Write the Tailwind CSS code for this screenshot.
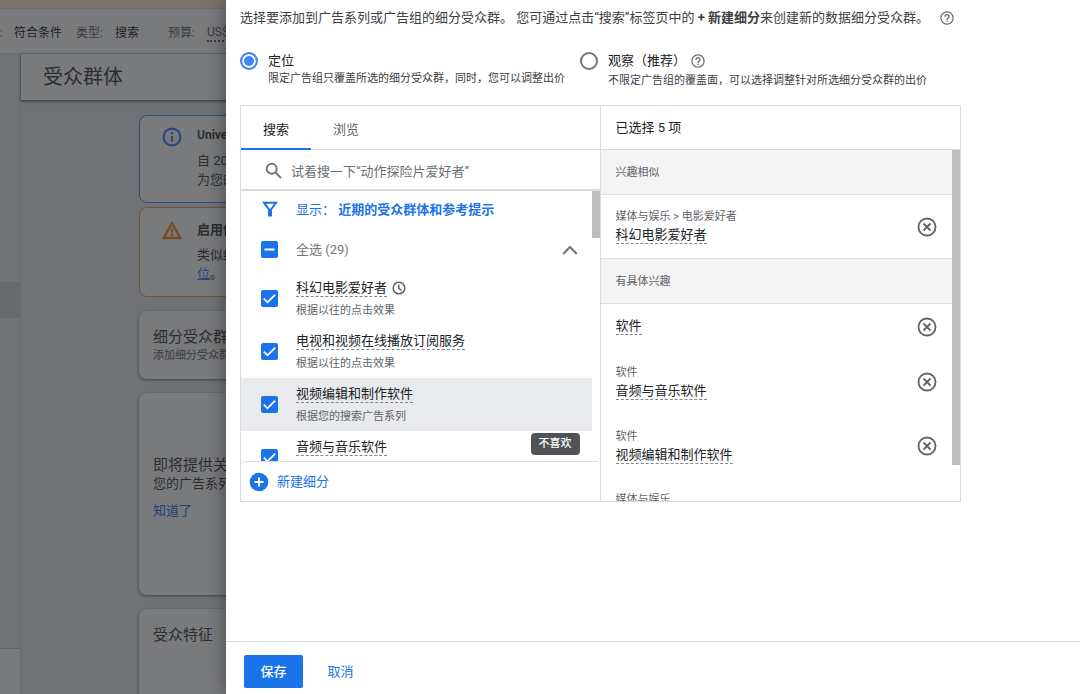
<!DOCTYPE html>
<html lang="zh-CN">
<head>
<meta charset="utf-8">
<meta name="viewport" content="width=device-width, initial-scale=1">
<title>受众群体</title>
<script src="https://cdn.jsdelivr.net/npm/@tailwindcss/browser@4"></script>
</head>
<body class="font-['Roboto','Noto_Sans_CJK_SC',sans-serif] text-[13px] leading-[17px] text-[#3c4043]">
<svg class="hidden" aria-hidden="true">
  <symbol id="help" viewBox="0 0 24 24"><path fill="currentColor" d="M11 18h2v-2h-2v2zm1-16C6.48 2 2 6.48 2 12s4.48 10 10 10 10-4.48 10-10S17.52 2 12 2zm0 18.300c-4.580 0-8.300-3.720-8.300-8.300s3.720-8.300 8.300-8.300 8.300 3.720 8.300 8.300-3.720 8.300-8.300 8.300zm0-14.300c-2.210 0-4 1.790-4 4h2c0-1.100.9-2 2-2s2 .9 2 2c0 2-3 1.750-3 5h2c0-2.250 3-2.500 3-5 0-2.210-1.790-4-4-4z"/></symbol>
  <symbol id="remove" viewBox="0 0 24 24"><g fill="none" stroke="currentColor" stroke-width="2"><circle cx="12" cy="12" r="9.300"/><path d="M8.200 8.200l7.600 7.600M15.800 8.200l-7.600 7.600"/></g></symbol>
  <symbol id="tick" viewBox="0 0 17 17"><path fill="none" stroke="#fff" stroke-width="1.800" d="M2.800 8.600l3.700 3.700 7.700-7.700"/></symbol>
</svg>
<div class="relative h-screen overflow-hidden bg-[#e8eaed]">

  <!-- Page behind the drawer -->
  <div class="flex h-full flex-col">
    <div class="h-2 shrink-0 bg-[#fef0d0]"></div>
    <header class="flex h-[46px] shrink-0 items-center border-y border-[#dadce0] bg-white pt-1 text-xs whitespace-nowrap text-[#5f6368]">
      <span class="w-3.5">:</span>
      <span class="w-[62px] text-[#202124]">符合条件</span>
      <span class="w-[39px]">类型:</span>
      <span class="w-[53px] text-[#202124]">搜索</span>
      <span class="w-[39px]">预算:</span>
      <span class="border-b-2 border-dotted border-[#5f6368]">US$10.00</span>
    </header>
    <div class="flex min-h-0 flex-1">
      <nav class="flex w-[21px] shrink-0 flex-col border-r border-[#dadce0]">
        <div class="mt-[228px] h-9 bg-[#d5d7da]"></div>
        <div class="mt-auto h-[46px] border-t border-[#bdc1c6] bg-white"></div>
      </nav>
      <main class="flex min-w-0 flex-1 flex-col">
        <h1 class="flex h-[46px] shrink-0 items-center bg-white pl-[22px] text-xl font-normal shadow-[0_1px_3px_rgba(0,0,0,0.7)]">受众群体</h1>
        <div class="flex flex-1 flex-col overflow-hidden pt-[15px] pl-[118px] whitespace-nowrap">
          <section class="mb-1 flex h-[88px] shrink-0 gap-3.5 rounded-lg border border-[#4a90ff] bg-white pt-2.5 pl-[21px]">
            <svg class="size-[22px] shrink-0 text-[#3b86ff]" viewBox="0 0 24 24"><g fill="none" stroke="currentColor" stroke-width="2.400"><circle cx="12" cy="12" r="9.200"/><path d="M12 6.500v2.400M12 11v6.500"/></g></svg>
            <div class="leading-[19px]">
              <h2 class="mb-1.5 text-xs leading-[19px] font-bold">Universal Analytics</h2>
              <p>自 2023 年起</p>
              <p>为您的账号</p>
            </div>
          </section>
          <section class="mb-3.5 flex h-[90px] shrink-0 gap-3.5 rounded-lg border border-[#f0a050] bg-white pt-3 pl-[21px]">
            <svg class="size-[22px] shrink-0 text-[#ff8c1a]" viewBox="0 0 24 24"><g fill="none" stroke="currentColor" stroke-width="2.600"><path d="M12 3.400L21 19.700H3z"/><path d="M12 9.500v4.500M12 15.400v2.400"/></g></svg>
            <div class="leading-[19px]">
              <h2 class="mb-1.5 font-bold">启用优化型定位</h2>
              <p>类似细分受众群</p>
              <p><a href="#" class="text-[#2a7fff] underline">位</a>。</p>
            </div>
          </section>
          <section class="mb-3.5 h-[68px] shrink-0 rounded-lg bg-white pt-4 pl-3.5 shadow-[0_1px_3px_rgba(0,0,0,0.5)]">
            <h2 class="text-[15px] leading-5">细分受众群</h2>
            <p class="text-[11px] text-[#5f6368]">添加细分受众群</p>
          </section>
          <section class="mb-3.5 flex h-[202px] shrink-0 flex-col items-start justify-center rounded-lg bg-white pb-3.5 pl-3.5 shadow-[0_1px_3px_rgba(0,0,0,0.5)]">
            <h2 class="text-[15px] leading-5">即将提供关于受众群体</h2>
            <p class="mb-2.5">您的广告系列</p>
            <a href="#" class="text-[#1a73ff]">知道了</a>
          </section>
          <section class="h-[120px] shrink-0 rounded-lg bg-white pt-4 pl-3.5 shadow-[0_1px_3px_rgba(0,0,0,0.5)]">
            <h2 class="text-[15px] leading-5">受众特征</h2>
          </section>
        </div>
      </main>
    </div>
  </div>
  <div class="absolute inset-0 bg-[#202124]/60"></div>

  <!-- Drawer -->
  <div role="dialog" aria-label="修改细分受众群" class="absolute inset-y-0 right-0 left-[226px] flex flex-col bg-white shadow-[0_0_18px_rgba(0,0,0,0.45)]">
    <div class="min-h-0 flex-1 overflow-hidden px-3.5 pt-[9px]">
      <p class="flex items-center gap-2.5 whitespace-nowrap">
        <span>选择要添加到广告系列或广告组的细分受众群。 您可通过点击“搜索”标签页中的 <b>+ 新建细分</b>来创建新的数据细分受众群。</span>
        <svg class="size-4 shrink-0 text-[#5f6368]"><use href="#help"/></svg>
      </p>

      <div class="mt-[26px] grid max-w-[721px] grid-cols-[340px_1fr]">
        <div class="flex gap-2.5">
          <input id="targeting" name="mode" type="radio" checked class="size-[18px] shrink-0 appearance-none rounded-full border-2 border-[#4285f4] bg-[#4285f4] shadow-[inset_0_0_0_2px_white]">
          <div>
            <label for="targeting" class="block text-[#202124]">定位</label>
            <p class="mt-0.5 text-[11px] leading-4 whitespace-nowrap">限定广告组只覆盖所选的细分受众群，同时，您可以调整出价</p>
          </div>
        </div>
        <div class="flex gap-2.5">
          <input id="observe" name="mode" type="radio" class="size-[18px] shrink-0 appearance-none rounded-full border-2 border-[#757575] bg-white">
          <div>
            <div class="flex items-center gap-1">
              <label for="observe" class="text-[#202124]">观察（推荐）</label>
              <svg class="size-4 text-[#5f6368]"><use href="#help"/></svg>
            </div>
            <p class="mt-1 text-[11px] leading-4 whitespace-nowrap">不限定广告组的覆盖面，可以选择调整针对所选细分受众群的出价</p>
          </div>
        </div>
      </div>

      <div class="mt-4 grid h-[397px] max-w-[721px] grid-cols-2 border border-[#dadce0]">
        <!-- Available segments -->
        <div class="flex min-h-0 flex-col border-r border-[#dadce0]">
          <div role="tablist" class="flex h-11 shrink-0 border-b border-[#dadce0]">
            <button role="tab" aria-selected="true" class="-mb-px w-[70px] border-b-2 border-[#1a73e8] pt-1 text-[#202124]">搜索</button>
            <button role="tab" aria-selected="false" class="w-[70px] pt-[3px] text-[#5f6368]">浏览</button>
          </div>
          <div class="flex h-[41px] shrink-0 items-center gap-1.5 border-b-2 border-[#dadce0] pt-1 pl-6">
            <svg class="size-5 shrink-0 text-[#757575]" viewBox="0 0 24 24"><g fill="none" stroke="currentColor" stroke-width="2.400"><circle cx="8" cy="8" r="6"/><path d="M12.400 12.400l6.800 6.800"/></g></svg>
            <input type="text" aria-label="搜索细分受众群" placeholder="试着搜一下“动作探险片爱好者”" class="h-6 min-w-0 flex-1 outline-none placeholder:text-[#6b6f73]">
          </div>
          <div class="flex min-h-0 flex-1 overflow-hidden">
            <div class="relative min-w-0 flex-1">
              <button class="flex h-9 items-center gap-[18px] pl-[21px] text-[#1a73e8]">
                <svg class="size-4" viewBox="0 0 16 16"><path fill="none" stroke="currentColor" stroke-width="2" d="M2 1.800h12L9 8.500v6h-2v-6z"/></svg>
                <span>显示： <b>近期的受众群体和参考提示</b></span>
              </button>
              <div class="flex h-[45px] items-center gap-[18px] pr-3.5 pl-5">
                <span class="grid shrink-0">
                  <input id="all" type="checkbox" class="col-start-1 row-start-1 size-[17px] appearance-none rounded-xs bg-[#1a73e8]">
                  <svg class="pointer-events-none col-start-1 row-start-1 size-[17px]" viewBox="0 0 17 17"><path stroke="#fff" stroke-width="2" d="M3.500 8.500h10"/></svg>
                </span>
                <label for="all" class="flex-1 text-[#757575]">全选 (29)</label>
                <button aria-label="收起"><svg class="size-4 text-[#757575]" viewBox="0 0 16 16"><path fill="none" stroke="currentColor" stroke-width="2" d="M1.200 12L8 5l6.800 7"/></svg></button>
              </div>
              <ul>
                <li class="flex h-[53px] items-center gap-[18px] pl-5">
                  <span class="grid shrink-0"><input id="s1" type="checkbox" checked class="col-start-1 row-start-1 size-[17px] appearance-none rounded-xs bg-[#1a73e8]"><svg class="pointer-events-none col-start-1 row-start-1 size-[17px]"><use href="#tick"/></svg></span>
                  <div>
                    <div class="flex items-center gap-1">
                      <label for="s1" class="border-b border-dashed border-[#80868b] text-[#202124]">科幻电影爱好者</label>
                      <svg class="size-4 text-[#5f6368]" viewBox="0 0 16 16"><g fill="none" stroke="currentColor" stroke-width="1.500"><circle cx="8" cy="8" r="5.800"/><path d="M7.800 4.500v3.800l2.800 2"/></g></svg>
                    </div>
                    <p class="mt-1.5 text-[11px] leading-4 text-[#5f6368]">根据以往的点击效果</p>
                  </div>
                </li>
                <li class="flex h-[53px] items-center gap-[18px] pl-5">
                  <span class="grid shrink-0"><input id="s2" type="checkbox" checked class="col-start-1 row-start-1 size-[17px] appearance-none rounded-xs bg-[#1a73e8]"><svg class="pointer-events-none col-start-1 row-start-1 size-[17px]"><use href="#tick"/></svg></span>
                  <div>
                    <div class="flex"><label for="s2" class="border-b border-dashed border-[#80868b] text-[#202124]">电视和视频在线播放订阅服务</label></div>
                    <p class="mt-1.5 text-[11px] leading-4 text-[#5f6368]">根据以往的点击效果</p>
                  </div>
                </li>
                <li class="flex h-[53px] items-center gap-[18px] bg-[#e8eaed] pl-5">
                  <span class="grid shrink-0"><input id="s3" type="checkbox" checked class="col-start-1 row-start-1 size-[17px] appearance-none rounded-xs bg-[#1a73e8]"><svg class="pointer-events-none col-start-1 row-start-1 size-[17px]"><use href="#tick"/></svg></span>
                  <div>
                    <div class="flex"><label for="s3" class="border-b border-dashed border-[#80868b] text-[#202124]">视频编辑和制作软件</label></div>
                    <p class="mt-1.5 text-[11px] leading-4 text-[#5f6368]">根据您的搜索广告系列</p>
                  </div>
                </li>
                <li class="flex h-[53px] items-center gap-[18px] pl-5">
                  <span class="grid shrink-0"><input id="s4" type="checkbox" checked class="col-start-1 row-start-1 size-[17px] appearance-none rounded-xs bg-[#1a73e8]"><svg class="pointer-events-none col-start-1 row-start-1 size-[17px]"><use href="#tick"/></svg></span>
                  <div>
                    <div class="flex"><label for="s4" class="border-b border-dashed border-[#80868b] text-[#202124]">音频与音乐软件</label></div>
                    <p class="mt-1.5 h-4"></p>
                  </div>
                </li>
              </ul>
              <div role="tooltip" class="absolute right-3 bottom-1.5 rounded-sm bg-[#505356] px-2 py-[3px] text-[11px] leading-4 font-medium text-white">不喜欢</div>
            </div>
            <div class="w-2 shrink-0"><div class="h-[47px] bg-[#bdbdbd]"></div></div>
          </div>
          <div class="flex h-10 shrink-0 items-center rounded-t-sm border-t border-[#dadce0] pl-2">
            <button class="flex items-center gap-2 text-[#1a73e8]">
              <svg class="size-5" viewBox="0 0 20 20"><circle cx="10" cy="10" r="9.300" fill="#1a73e8"/><path stroke="#fff" stroke-width="2" d="M5.500 10h9M10 5.500v9"/></svg>
              新建细分
            </button>
          </div>
        </div>

        <!-- Selected segments -->
        <div class="flex min-h-0 flex-col">
          <h2 class="flex h-11 shrink-0 items-center border-b border-[#dadce0] pl-[15px] text-[#202124]">已选择 5 项</h2>
          <div class="flex min-h-0 flex-1 overflow-hidden">
            <div class="min-w-0 flex-1 text-[#202124]">
              <h3 class="flex h-[45px] items-center border-b border-[#e0e0e0] bg-[#f4f4f4] pl-[15px] text-[11px] text-[#5f6368]">兴趣相似</h3>
              <div class="flex h-16 items-center justify-between border-b border-[#dadce0] pr-3.5 pl-[15px]">
                <div class="flex flex-col items-start gap-px">
                  <span class="text-[11px] leading-4 text-[#5f6368]">媒体与娱乐 &gt; 电影爱好者</span>
                  <span class="border-b border-dashed border-[#80868b]">科幻电影爱好者</span>
                </div>
                <button aria-label="移除科幻电影爱好者" class="text-[#5f6368]"><svg class="size-[22px]"><use href="#remove"/></svg></button>
              </div>
              <h3 class="flex h-[45px] items-center border-b border-[#e0e0e0] bg-[#f4f4f4] pl-[15px] text-[11px] text-[#5f6368]">有具体兴趣</h3>
              <div class="flex h-[46px] items-center justify-between pr-3.5 pl-[15px]">
                <div class="pb-0.5"><span class="block border-b border-dashed border-[#80868b]">软件</span></div>
                <button aria-label="移除软件" class="text-[#5f6368]"><svg class="size-[22px]"><use href="#remove"/></svg></button>
              </div>
              <div class="flex h-16 items-center justify-between pr-3.5 pl-[15px]">
                <div class="flex flex-col items-start gap-px">
                  <span class="text-[11px] leading-4 text-[#5f6368]">软件</span>
                  <span class="border-b border-dashed border-[#80868b]">音频与音乐软件</span>
                </div>
                <button aria-label="移除音频与音乐软件" class="text-[#5f6368]"><svg class="size-[22px]"><use href="#remove"/></svg></button>
              </div>
              <div class="flex h-16 items-center justify-between pr-3.5 pl-[15px]">
                <div class="flex flex-col items-start gap-px">
                  <span class="text-[11px] leading-4 text-[#5f6368]">软件</span>
                  <span class="border-b border-dashed border-[#80868b]">视频编辑和制作软件</span>
                </div>
                <button aria-label="移除视频编辑和制作软件" class="text-[#5f6368]"><svg class="size-[22px]"><use href="#remove"/></svg></button>
              </div>
              <div class="pt-3.5 pl-[15px] text-[11px] leading-4 text-[#5f6368]">媒体与娱乐</div>
            </div>
            <div class="w-2 shrink-0"><div class="h-[315px] bg-[#bdbdbd]"></div></div>
          </div>
        </div>
      </div>
    </div>
    <footer class="flex h-[53px] shrink-0 items-center gap-2 border-t border-[#dadce0] pt-1.5 pl-[18px]">
      <button class="h-[33px] w-[59px] rounded-xs bg-[#1a73e8] font-medium text-white">保存</button>
      <button class="h-[33px] w-[59px] text-[#1a73e8]">取消</button>
    </footer>
  </div>
</div>
</body>
</html>
